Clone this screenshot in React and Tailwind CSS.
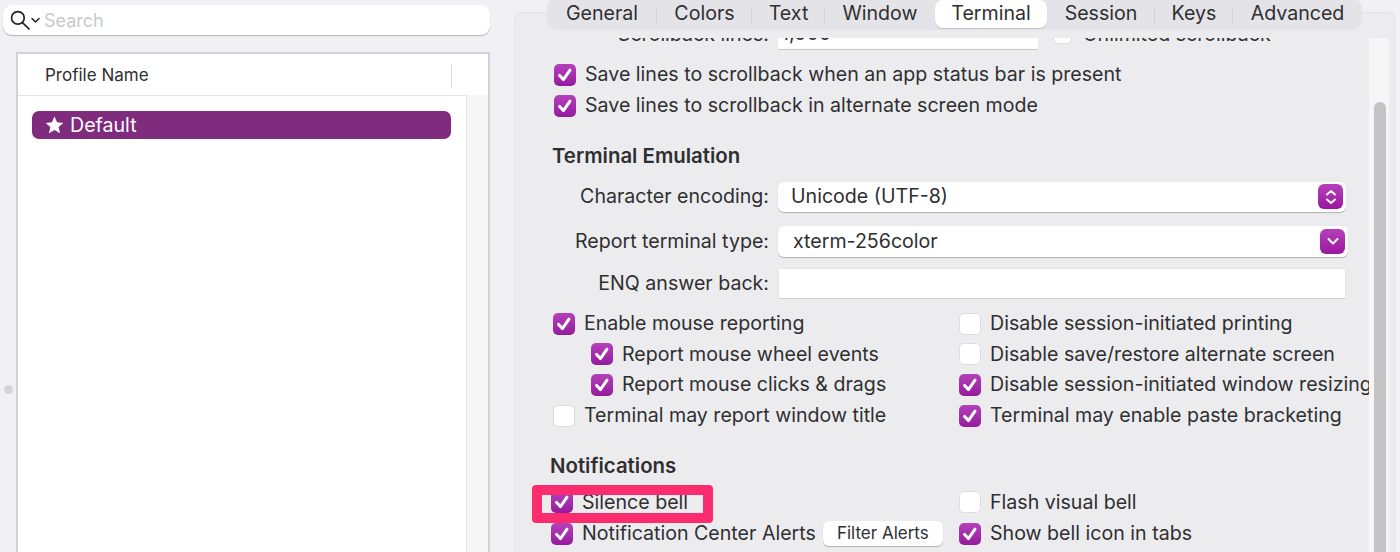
const tabs = [
  { name: "General", w: "w-[110px]", sep: true },
  { name: "Colors", w: "w-[95px]", sep: true },
  { name: "Text", w: "w-[73px]", sep: true },
  { name: "Window", w: "w-[110px]" },
  { name: "Terminal", w: "w-[112px]", active: true },
  { name: "Session", w: "w-[108px]", sep: true },
  { name: "Keys", w: "w-[78px]", sep: true },
  { name: "Advanced", w: "w-[129px]" },
];

function Check({ on = true }) {
  if (!on) {
    return <span className="w-[22px] h-[22px] shrink-0 rounded-[5px] bg-white border border-[#dddde0]" />;
  }
  return (
    <span className="w-[22px] h-[22px] shrink-0 rounded-[5px] bg-gradient-to-b from-[#b540bb] to-[#951a9d] flex items-center justify-center">
      <svg width="16" height="16" viewBox="0 0 16 16" fill="none" stroke="white" strokeWidth="3" strokeLinecap="round" strokeLinejoin="round">
        <path d="M2.6 8.4 6.4 12.6 13 3.2" />
      </svg>
    </span>
  );
}

function CheckRow({ label, on = true, className = "", children }) {
  return (
    <div className={`h-[30.7px] flex items-center gap-[9px] whitespace-nowrap ${className}`}>
      <Check on={on} />
      <span>{label}</span>
      {children}
    </div>
  );
}

function Chevron({ double }) {
  return (
    <span className="w-[25px] h-[25px] rounded-[6px] bg-gradient-to-b from-[#b53fbb] to-[#9a169f] flex items-center justify-center">
      <svg width="14" height="18" viewBox="0 0 14 18" fill="none" stroke="white" strokeWidth="2" strokeLinecap="round" strokeLinejoin="round">
        {double ? (
          <>
            <path d="M3 6.5 7 3l4 3.5" />
            <path d="M3 11.5 7 15l4-3.5" />
          </>
        ) : (
          <path d="M2.5 7 7 11.5 11.5 7" />
        )}
      </svg>
    </span>
  );
}

function FormRow({ label, className = "", children }) {
  return (
    <div className={`flex items-center ${className}`}>
      <span className="w-[219px] text-right shrink-0">{label}</span>
      <div className="ml-[9px] w-[568px]">{children}</div>
    </div>
  );
}

export default function App() {
  return (
    <div
      className="relative w-[1400px] h-[552px] overflow-hidden bg-[#f0f0f5] text-[19.6px] text-[#2f2f31] flex"
      style={{ fontFamily: '"Inter", "Liberation Sans", sans-serif' }}
    >
      {/* left side */}
      <div className="w-[514px] shrink-0 pt-[5px] pl-[3px]">
        <div className="w-[487px] h-[30px] rounded-[9px] bg-white shadow-[0_1px_1px_rgba(0,0,0,0.25)] flex items-center pl-[7px]">
          <svg width="20" height="20" viewBox="0 0 19 19" fill="none" stroke="#222" strokeWidth="1.6" strokeLinecap="round">
            <circle cx="7.5" cy="7.5" r="6" />
            <path d="M11.8 12 18 18" />
          </svg>
          <svg className="ml-[1px]" width="9" height="7" viewBox="0 0 9 7" fill="none" stroke="#222" strokeWidth="1.5" strokeLinecap="round" strokeLinejoin="round">
            <path d="M1 1.5 4.5 5 8 1.5" />
          </svg>
          <span className="ml-[4px] text-[#c9c9cc] text-[18px]">Search</span>
        </div>
        <div className="ml-[13px] mt-[17px] w-[474px] h-[520px] border-2 border-[#d2d2d6] bg-white">
          <div className="h-[41px] flex items-center text-[17px] pt-[2px]">
            <span className="ml-[27px] w-[406px]">Profile Name</span>
            <span className="w-px h-[24px] bg-[#dcdcdf]" />
          </div>
          <div className="flex h-full bg-[#f6f6f7]">
            <div className="w-[449px] h-full bg-white border-t border-r border-[#e4e4e7] pt-[15px] pl-[14px]">
              <div className="w-[419px] h-[28px] rounded-[7px] bg-[#7f2b7e] text-white flex items-center pl-[13px] gap-[6px]">
                <svg width="19" height="18" viewBox="0 0 24 23" fill="white">
                  <path d="M12 0.6 15.3 8l8 .8-6 5.4 1.8 8L12 18l-7.1 4.2 1.8-8-6-5.4 8-.8z" />
                </svg>
                <span className="pt-[1px]">Default</span>
              </div>
            </div>
          </div>
        </div>
      </div>

      <span className="absolute left-[4px] top-[385px] w-[9px] h-[9px] rounded-full bg-[#d4d4d8]" />

      {/* right panel */}
      <div className="mt-[12px] w-[881px] h-[560px] rounded-[6px] border border-[#e4e4e7] bg-[#ececef] pt-[25px] flex overflow-hidden">
        <div className="w-[854px] shrink-0 overflow-hidden pl-[35px] leading-none">
          <div className="-mt-[19px] h-[30px] flex items-center pt-[1px]">
            <span className="w-[219px] text-right shrink-0">Scrollback lines:</span>
            <div className="ml-[9px] w-[260px] h-[30px] bg-white border-b border-[#c9c9cc] flex items-center pl-[3px]">1,000</div>
            <span className="ml-[15px] w-[19px] h-[19px] rounded-[5px] bg-white border border-[#dddde0]" />
            <span className="ml-[11px]">Unlimited scrollback</span>
          </div>

          <CheckRow label="Save lines to scrollback when an app status bar is present" className="mt-[10.5px] ml-[4px]" />
          <CheckRow label="Save lines to scrollback in alternate screen mode" className="ml-[4px]" />

          <div className="mt-[23px] h-[24px] ml-[2px] text-[20.4px] font-semibold flex items-center">Terminal Emulation</div>

          <FormRow label="Character encoding:" className="mt-[14px] h-[30px]">
            <div className="h-[30px] rounded-[6px] bg-white shadow-[0_1px_1px_rgba(0,0,0,0.25)] flex items-center justify-between pl-[13px] pr-[3px]">
              <span>Unicode (UTF-8)</span>
              <Chevron double />
            </div>
          </FormRow>
          <FormRow label="Report terminal type:" className="mt-[14px] h-[31px]">
            <div className="-mr-[2px] h-[31px] rounded-[6px] bg-white shadow-[0_1px_1px_rgba(0,0,0,0.25)] flex items-center justify-between pl-[15px] pr-[3px]">
              <span>xterm-256color</span>
              <Chevron />
            </div>
          </FormRow>
          <FormRow label="ENQ answer back:" className="mt-[11px] h-[31px]">
            <div className="h-[31px] bg-white border border-[#e6e6e9] border-b-[#d0d0d3]" />
          </FormRow>

          <div className="mt-[9.5px] grid grid-cols-[406px_1fr] ml-[3px]">
            <div>
              <CheckRow label="Enable mouse reporting" />
              <CheckRow label="Report mouse wheel events" className="ml-[38px]" />
              <CheckRow label="Report mouse clicks &amp; drags" className="ml-[38px]" />
              <CheckRow label="Terminal may report window title" on={false} />
            </div>
            <div>
              <CheckRow label="Disable session-initiated printing" on={false} />
              <CheckRow label="Disable save/restore alternate screen" on={false} />
              <CheckRow label="Disable session-initiated window resizing" />
              <CheckRow label="Terminal may enable paste bracketing" />
            </div>
          </div>

          <div className="mt-[23px] h-[24px] text-[20.4px] font-semibold flex items-center">Notifications</div>

          <div className="mt-[9px] grid grid-cols-[408px_1fr] ml-[1px]">
            <div>
              <CheckRow label="Silence bell" />
              <CheckRow label="Notification Center Alerts" className="mt-[0.5px]">
                <span className="ml-[-2px] h-[25px] w-[120px] rounded-[6px] bg-white shadow-[0_1px_1px_rgba(0,0,0,0.25)] text-[17px] flex items-center justify-center">Filter Alerts</span>
              </CheckRow>
            </div>
            <div>
              <CheckRow label="Flash visual bell" on={false} />
              <CheckRow label="Show bell icon in tabs" className="mt-[0.5px]" />
            </div>
          </div>
        </div>

        {/* scrollbar */}
        <div className="w-[20px] shrink-0 bg-[#f6f6f7] relative">
          <span className="absolute left-[5px] top-[64px] w-[12px] h-[470px] rounded-full bg-[#c4c4c6]" />
        </div>
      </div>

      {/* tab bar over the panel */}
      <div className="absolute left-[547px] -top-[2px] w-[815px] h-[32px] rounded-[10px] bg-[#e4e4e8] flex items-center">
        {tabs.map((t) => (
          <div key={t.name} className={`relative h-full flex items-center justify-center ${t.w}`}>
            {t.active && <span className="absolute inset-x-0 top-[2px] h-[28px] rounded-[8px] bg-white shadow-[0_1px_1px_rgba(0,0,0,0.15)]" />}
            <span className="relative">{t.name}</span>
            {t.sep && <span className="absolute right-0 top-[8px] w-px h-[18px] bg-[#d4d4d8]" />}
          </div>
        ))}
      </div>

      {/* pink highlight */}
      <div className="absolute left-[532px] top-[485px] w-[181px] h-[38px] rounded-[4px] border-[10px] border-[#fb2c6e]" />
    </div>
  );
}
